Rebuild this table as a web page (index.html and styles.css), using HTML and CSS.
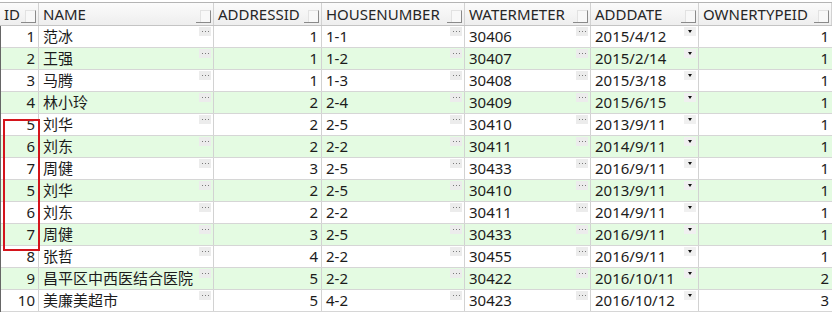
FILE: index.html
```html
<!DOCTYPE html>
<html>
<head>
<meta charset="utf-8">
<link rel="stylesheet" href="styles.css">
</head>
<body>
<div class="grid">
  <div class="row head">
    <div class="hc"><span class="ht">ID</span><span class="sorter"></span></div>
    <div class="hc"><span class="ht">NAME</span><span class="sorter"></span></div>
    <div class="hc"><span class="ht">ADDRESSID</span><span class="sorter"></span></div>
    <div class="hc"><span class="ht">HOUSENUMBER</span><span class="sorter"></span></div>
    <div class="hc"><span class="ht">WATERMETER</span><span class="sorter"></span></div>
    <div class="hc"><span class="ht">ADDDATE</span><span class="sorter"></span></div>
    <div class="hc"><span class="ht">OWNERTYPEID</span><span class="sorter"></span></div>
  </div>
  <div class="body">
    <div class="row"><div class="c num">1</div><div class="c txt">范冰<i class="dots"></i></div><div class="c num">1</div><div class="c txt">1-1<i class="dots"></i></div><div class="c txt">30406<i class="dots"></i></div><div class="c txt">2015/4/12<i class="drop"></i></div><div class="c num">1</div></div>
    <div class="row alt"><div class="c num">2</div><div class="c txt">王强<i class="dots"></i></div><div class="c num">1</div><div class="c txt">1-2<i class="dots"></i></div><div class="c txt">30407<i class="dots"></i></div><div class="c txt">2015/2/14<i class="drop"></i></div><div class="c num">1</div></div>
    <div class="row"><div class="c num">3</div><div class="c txt">马腾<i class="dots"></i></div><div class="c num">1</div><div class="c txt">1-3<i class="dots"></i></div><div class="c txt">30408<i class="dots"></i></div><div class="c txt">2015/3/18<i class="drop"></i></div><div class="c num">1</div></div>
    <div class="row alt"><div class="c num">4</div><div class="c txt">林小玲<i class="dots"></i></div><div class="c num">2</div><div class="c txt">2-4<i class="dots"></i></div><div class="c txt">30409<i class="dots"></i></div><div class="c txt">2015/6/15<i class="drop"></i></div><div class="c num">1</div></div>
    <div class="row"><div class="c num">5</div><div class="c txt">刘华<i class="dots"></i></div><div class="c num">2</div><div class="c txt">2-5<i class="dots"></i></div><div class="c txt">30410<i class="dots"></i></div><div class="c txt">2013/9/11<i class="drop"></i></div><div class="c num">1</div></div>
    <div class="row alt"><div class="c num">6</div><div class="c txt">刘东<i class="dots"></i></div><div class="c num">2</div><div class="c txt">2-2<i class="dots"></i></div><div class="c txt">30411<i class="dots"></i></div><div class="c txt">2014/9/11<i class="drop"></i></div><div class="c num">1</div></div>
    <div class="row"><div class="c num">7</div><div class="c txt">周健<i class="dots"></i></div><div class="c num">3</div><div class="c txt">2-5<i class="dots"></i></div><div class="c txt">30433<i class="dots"></i></div><div class="c txt">2016/9/11<i class="drop"></i></div><div class="c num">1</div></div>
    <div class="row alt"><div class="c num">5</div><div class="c txt">刘华<i class="dots"></i></div><div class="c num">2</div><div class="c txt">2-5<i class="dots"></i></div><div class="c txt">30410<i class="dots"></i></div><div class="c txt">2013/9/11<i class="drop"></i></div><div class="c num">1</div></div>
    <div class="row"><div class="c num">6</div><div class="c txt">刘东<i class="dots"></i></div><div class="c num">2</div><div class="c txt">2-2<i class="dots"></i></div><div class="c txt">30411<i class="dots"></i></div><div class="c txt">2014/9/11<i class="drop"></i></div><div class="c num">1</div></div>
    <div class="row alt"><div class="c num">7</div><div class="c txt">周健<i class="dots"></i></div><div class="c num">3</div><div class="c txt">2-5<i class="dots"></i></div><div class="c txt">30433<i class="dots"></i></div><div class="c txt">2016/9/11<i class="drop"></i></div><div class="c num">1</div></div>
    <div class="row"><div class="c num">8</div><div class="c txt">张哲<i class="dots"></i></div><div class="c num">4</div><div class="c txt">2-2<i class="dots"></i></div><div class="c txt">30455<i class="dots"></i></div><div class="c txt">2016/9/11<i class="drop"></i></div><div class="c num">1</div></div>
    <div class="row alt"><div class="c num">9</div><div class="c txt">昌平区中西医结合医院<i class="dots"></i></div><div class="c num">5</div><div class="c txt">2-2<i class="dots"></i></div><div class="c txt">30422<i class="dots"></i></div><div class="c txt">2016/10/11<i class="drop"></i></div><div class="c num">2</div></div>
    <div class="row"><div class="c num">10</div><div class="c txt">美廉美超市<i class="dots"></i></div><div class="c num">5</div><div class="c txt">4-2<i class="dots"></i></div><div class="c txt">30423<i class="dots"></i></div><div class="c txt">2016/10/12<i class="drop"></i></div><div class="c num">3</div></div>
    <div class="mark"></div>
  </div>
</div>
</body>
</html>
```
FILE: styles.css
```css
html, body {
  margin: 0;
  padding: 0;
  background: #ffffff;
}
body {
  font-family: "Noto Sans", "Noto Sans CJK SC", sans-serif;
  font-size: 15px;
  color: #1c1c1c;
  padding-top: 2px;
}
.grid {
  width: 832px;
}
.row {
  display: grid;
  grid-template-columns: 39px 175px 108px 143px 126px 108px 133px;
  height: 22px;
  box-sizing: border-box;
  border-bottom: 1px solid #d6d6d6;
}
.row.alt {
  background: #e4fbe2;
}
.head {
  height: 24px;
  border-top: 1px solid #b4b4b4;
  border-bottom: 1px solid #c4c4c4;
  background: linear-gradient(#fbfbfb, #eeeeee);
}
.hc {
  position: relative;
  display: flex;
  align-items: center;
  padding-left: 4px;
  border-right: 1px solid #d2d2d2;
  color: #262626;
  white-space: nowrap;
  overflow: hidden;
}
.ht {
  line-height: 22px;
}
.sorter {
  position: absolute;
  right: 2px;
  top: 7px;
  width: 9px;
  height: 11px;
  background: #f8f8f8;
  border-right: 1px solid #8a8a8a;
  border-bottom: 1px solid #8a8a8a;
  border-left: 1px solid #e2e2e2;
  border-top: 1px solid #e2e2e2;
}
.sorter::before {
  content: "";
  position: absolute;
  left: -5px;
  bottom: -1px;
  width: 5px;
  height: 1px;
  background: #8a8a8a;
}
.body {
  position: relative;
  border-left: 1px solid #666;
}
.body .row {
  grid-template-columns: 38px 175px 108px 143px 126px 108px 133px;
}
.c {
  position: relative;
  border-right: 1px solid #d2d2d2;
  line-height: 21px;
  white-space: nowrap;
  overflow: hidden;
}
.c:last-child {
  border-right: none;
}
.num {
  text-align: right;
  padding-right: 3px;
}
.txt {
  padding-left: 4px;
}
.dots, .drop {
  position: absolute;
  right: 2px;
  top: 1px;
  width: 12px;
  height: 9px;
  background: #ececec;
}
.dots::before {
  content: "";
  position: absolute;
  left: 3px;
  top: 4px;
  width: 1px;
  height: 1px;
  background: #7a7a7a;
  box-shadow: 3px 0 0 #7a7a7a, 6px 0 0 #7a7a7a;
}
.drop {
  background: #f0f0f0;
}
.drop::before {
  content: "";
  position: absolute;
  left: 4px;
  top: 3px;
  border-left: 2.5px solid transparent;
  border-right: 2.5px solid transparent;
  border-top: 3px solid #111;
}
.mark {
  position: absolute;
  left: 2px;
  top: 93px;
  width: 33px;
  height: 128px;
  border: 2px solid #d4141c;
}
```
